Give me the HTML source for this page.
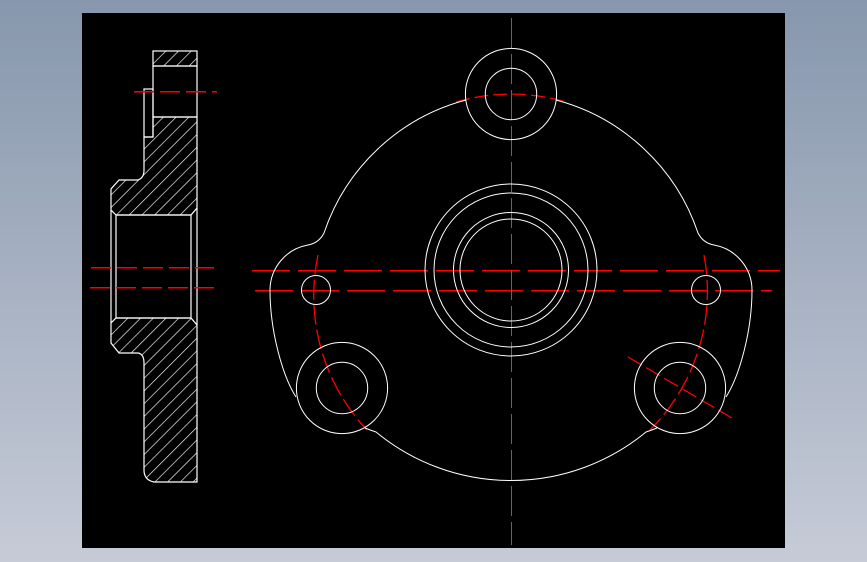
<!DOCTYPE html>
<html><head><meta charset="utf-8"><style>
html,body{margin:0;padding:0;width:867px;height:562px;overflow:hidden;background:linear-gradient(#8797ad,#c6cbd7);}
svg{position:absolute;left:0;top:0}
</style></head><body>
<svg width="867" height="562" viewBox="0 0 867 562">
<defs>
<pattern id="h" patternUnits="userSpaceOnUse" width="9" height="9" patternTransform="rotate(45)">
<line x1="0" y1="0" x2="0" y2="9" stroke="#fff" stroke-width="1.3"/>
</pattern>
</defs>
<rect x="82" y="13" width="703" height="535" fill="#000"/>
<g fill="url(#h)" stroke="#fff" stroke-width="1.2">
<rect x="153" y="51" width="44" height="15"/>
<path d="M153 117 L197 117 L197 208 L191 215 L116 215 L111 210 L111 189 L119 180 L138 180 Q144 178 144 170 L144 137 L153 137 Z"/>
<path d="M116 318 L191 318 L197 325 L197 482 L154 482 Q144 480 144 470 L144 363 Q144 354 138 353 L119 353 L111 343 L111 323 Z"/>
</g>
<g fill="none" stroke="#fff" stroke-width="1.2">
<rect x="153" y="66" width="44" height="51"/>
<rect x="144" y="89" width="9" height="48"/>
<rect x="116" y="215" width="75" height="103"/>
<line x1="111" y1="210" x2="111" y2="323"/>
<line x1="197" y1="208" x2="197" y2="325"/>
</g>
<g stroke="#ff0000" stroke-width="1.5" stroke-dasharray="20,6" fill="none" shape-rendering="crispEdges">
<line x1="134" y1="91.5" x2="217" y2="91.5"/>
<line x1="91" y1="267.5" x2="214" y2="267.5"/>
<line x1="90" y1="287.5" x2="217" y2="287.5"/>
<line x1="252" y1="270.5" x2="780" y2="270.5" stroke-dasharray="38,8"/>
<line x1="255" y1="290.5" x2="772" y2="290.5" stroke-dasharray="38,8"/>
<line x1="511.5" y1="18" x2="511.5" y2="545" stroke-dasharray="30,6" stroke-width="1" stroke="#e03030"/>
</g>
<g stroke="#ff0000" stroke-width="1.3" fill="none">
<path d="M456 102 A196 196 0 0 1 566 102" stroke-dasharray="14,5"/>
<path d="M318 255 A196 196 0 0 0 367 430" stroke-dasharray="20,5"/>
<path d="M704 255 A196 196 0 0 1 650 430" stroke-dasharray="20,5"/>
<line x1="628" y1="357" x2="732" y2="418" stroke-dasharray="16,5"/>
</g>
<g fill="none" stroke="#fff" stroke-width="1">
<circle cx="511" cy="270" r="86"/>
<circle cx="511" cy="270" r="77"/>
<circle cx="511" cy="270" r="57.5"/>
<circle cx="511" cy="270" r="51"/>
<circle cx="511" cy="94" r="45.6"/>
<circle cx="511" cy="94" r="25.7"/>
<circle cx="342" cy="388" r="45.6"/>
<circle cx="342" cy="388" r="25.7"/>
<circle cx="680" cy="388" r="45.6"/>
<circle cx="680" cy="388" r="25.7"/>
<circle cx="316" cy="290" r="14.5"/>
<circle cx="706" cy="290" r="14.5"/>
<path d="M466 100 A205 205 0 0 0 324 233 Q319 243 308 245 A46 46 0 0 0 270 290 C270 330 282 375 296 397"/>
<path d="M556 100 A205 205 0 0 1 698 233 Q703 243 714 245 A46 46 0 0 1 752 290 C752 330 740 375 726 397"/>
<path d="M365 428 Q370 430 376 432 A212 212 0 0 0 646 432 Q652 430 657 428"/>
</g>
</svg>
</body></html>
